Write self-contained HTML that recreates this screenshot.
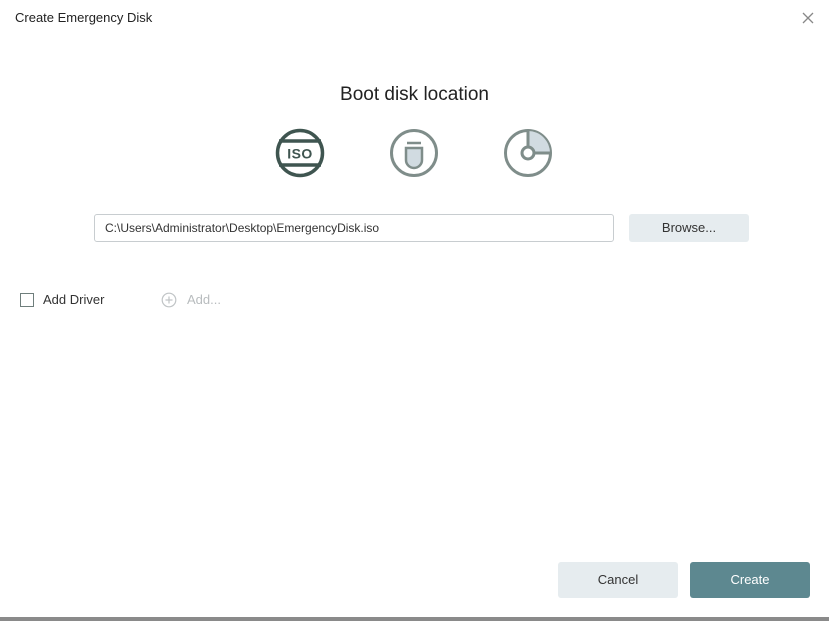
<!DOCTYPE html>
<html><head><meta charset="utf-8"><style>
*{margin:0;padding:0;box-sizing:border-box}
body{width:829px;height:621px;background:#fff;font-family:"Liberation Sans",sans-serif;position:relative;overflow:hidden;color:#222}
.abs{position:absolute}
.title{left:15px;top:10px;font-size:13px;color:#222}
.h{left:0;width:829px;top:84px;text-align:center;font-size:19px;color:#222}
.inp{left:94px;top:214px;width:520px;height:28px;border:1px solid #c8cdd0;border-radius:3px;font-size:12px;line-height:26px;padding-left:10px;color:#333}
.btn{border-radius:3px;font-size:13px;text-align:center}
.browse{left:629px;top:214px;width:120px;height:28px;line-height:28px;background:#e6ecef;color:#333}
.cancel{left:558px;top:562px;width:120px;height:36px;line-height:36px;background:#e6ecef;color:#333}
.create{left:690px;top:562px;width:120px;height:36px;line-height:36px;background:#5d8890;color:#fff}
.cb{left:20px;top:293px;width:14px;height:14px;border:1.5px solid #6f7e7c}
.lbl{left:43px;top:292px;font-size:13px;color:#333}
.add{left:187px;top:292px;font-size:13px;color:#b8bcbe}
.bar{left:0;top:617px;width:829px;height:4px;background:#8a8a8a}
</style></head><body>
<div class="abs title">Create Emergency Disk</div>
<svg class="abs" style="left:801px;top:11px" width="14" height="14"><path d="M2 2L12 12M12 2L2 12" stroke="#888" stroke-width="1.3"/></svg>
<div class="abs h">Boot disk location</div>
<svg class="abs" style="left:270px;top:124px" width="290" height="60">
 <circle cx="30" cy="29" r="22.5" fill="none" stroke="#3f5550" stroke-width="3.5"/>
 <path d="M9 17H51M9 41H51" stroke="#3f5550" stroke-width="3.5"/>
 <text x="30" y="34.5" text-anchor="middle" font-family="Liberation Sans,sans-serif" font-weight="bold" font-size="14" letter-spacing="0.5" fill="#3f5550">ISO</text>
 <circle cx="144" cy="29" r="22.5" fill="none" stroke="#7f8d8a" stroke-width="3"/>
 <path d="M137 19H151" stroke="#7f8d8a" stroke-width="2.5"/>
 <path d="M136 24H152V36A8 8 0 0 1 136 36Z" fill="#d1dbe1" stroke="#7f8d8a" stroke-width="2.5"/>
 <circle cx="258" cy="29" r="22.5" fill="none" stroke="#7f8d8a" stroke-width="3"/>
 <path d="M258 7A22 22 0 0 1 280 29H258Z" fill="#d1dbe1"/>
 <path d="M258 7V23M264 29H280" stroke="#7f8d8a" stroke-width="3"/>
 <circle cx="258" cy="29" r="6" fill="#fff" stroke="#7f8d8a" stroke-width="3"/>
</svg>
<div class="abs inp">C:\Users\Administrator\Desktop\EmergencyDisk.iso</div>
<div class="abs btn browse">Browse...</div>
<div class="abs cb"></div>
<div class="abs lbl">Add Driver</div>
<svg class="abs" style="left:161px;top:292px" width="16" height="16"><circle cx="8" cy="8" r="6.8" fill="none" stroke="#c0c4c6" stroke-width="1.2"/><path d="M8 4.5V11.5M4.5 8H11.5" stroke="#c0c4c6" stroke-width="1.2"/></svg>
<div class="abs add">Add...</div>
<div class="abs btn cancel">Cancel</div>
<div class="abs btn create">Create</div>
<div class="abs bar"></div>
</body></html>
